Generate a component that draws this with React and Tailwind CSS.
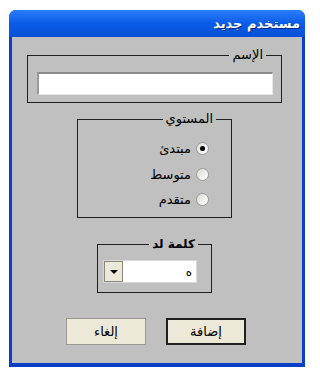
export default function App() {
  const font = { fontFamily: '"DejaVu Sans", sans-serif' };
  const Radio = ({ checked, label }) => (
    <div className="flex items-center gap-[5px] h-[13px]">
      <div className="w-[13px] h-[13px] rounded-full border border-[#9a9a9a] bg-gradient-to-br from-[#dcdcd4] to-white flex items-center justify-center">
        {checked && <div className="w-[5px] h-[5px] rounded-full bg-black" />}
      </div>
      <span className="text-[13px] leading-none text-black">{label}</span>
    </div>
  );
  return (
    <div dir="rtl" className="w-[320px] h-[374px] bg-white pt-[10px] overflow-hidden" style={font}>
      <div className="w-[296px] mr-[15px] rounded-t-[7px] bg-[#0a5ce4] overflow-hidden">
        <div className="h-[27px] bg-gradient-to-b from-[#2a7cf8] via-[#0a5ce8] to-[#0650d8] flex items-center pr-[5px]">
          <span className="text-white font-bold text-[13px] [text-shadow:1px_1px_0_#0a2a80]">مستخدم جديد</span>
        </div>
        <div className="border-x-[3px] border-b-[4px] border-[#0a3fc8]">
          <div dir="ltr" className="h-[326px] bg-[#c0c0c0] flex flex-col items-start">
            {/* Name group */}
            <div className="relative ml-[15px] mt-[18px] w-[255px] h-[48px] border border-[#202020]">
              <span className="absolute right-[15px] -top-[9px] bg-[#c0c0c0] px-[3px] text-[13px] leading-[16px] text-black">الإسم</span>
              <div className="mt-[16px] ml-[9px] w-[236px] h-[23px] bg-white border-t-2 border-l-2 border-t-[#8a8a8a] border-l-[#9a9a9a] border-b border-r border-b-[#e8e8e8] border-r-[#e8e8e8]" />
            </div>
            {/* Level group */}
            <div className="relative ml-[65px] mt-[16px] w-[155px] h-[99px] border border-[#202020]">
              <span className="absolute right-[15px] -top-[9px] bg-[#c0c0c0] px-[3px] text-[13px] leading-[16px] text-black">المستوي</span>
              <div dir="rtl" className="flex flex-col items-start gap-[12.5px] pr-[22px] pt-[22px]">
                <Radio checked label="مبتدئ" />
                <Radio label="متوسط" />
                <Radio label="متقدم" />
              </div>
            </div>
            {/* Password group */}
            <div className="relative ml-[85px] mt-[26px] w-[115px] h-[49px] border border-[#202020]">
              <span className="absolute right-[13px] -top-[9px] bg-[#c0c0c0] px-[3px] text-[12px] leading-[16px] font-bold text-black">كلمة لد</span>
              <div className="mt-[15px] ml-[5px] w-[94px] h-[23px] bg-white flex items-center border border-[#d8d8d8]">
                <div className="w-[19px] h-[21px] bg-[#ece9d8] border border-[#8a8a80] flex items-center justify-center">
                  <div className="w-0 h-0 border-l-[4px] border-r-[4px] border-t-[4px] border-l-transparent border-r-transparent border-t-black" />
                </div>
                <span className="flex-1 text-right pr-[4px] text-[12px] text-black">ه</span>
              </div>
            </div>
            {/* Buttons */}
            <div className="ml-[54px] mt-[25px] flex gap-[20px]">
              <button className="w-[80px] h-[27px] bg-[#ece9d8] border border-[#9a9a90] text-[13px] text-black flex items-center justify-center" style={font}>إلغاء</button>
              <button className="w-[80px] h-[27px] bg-[#ece9d8] border-2 border-[#202020] text-[13px] text-black flex items-center justify-center" style={font}>إضافة</button>
            </div>
          </div>
        </div>
      </div>
    </div>
  );
}
